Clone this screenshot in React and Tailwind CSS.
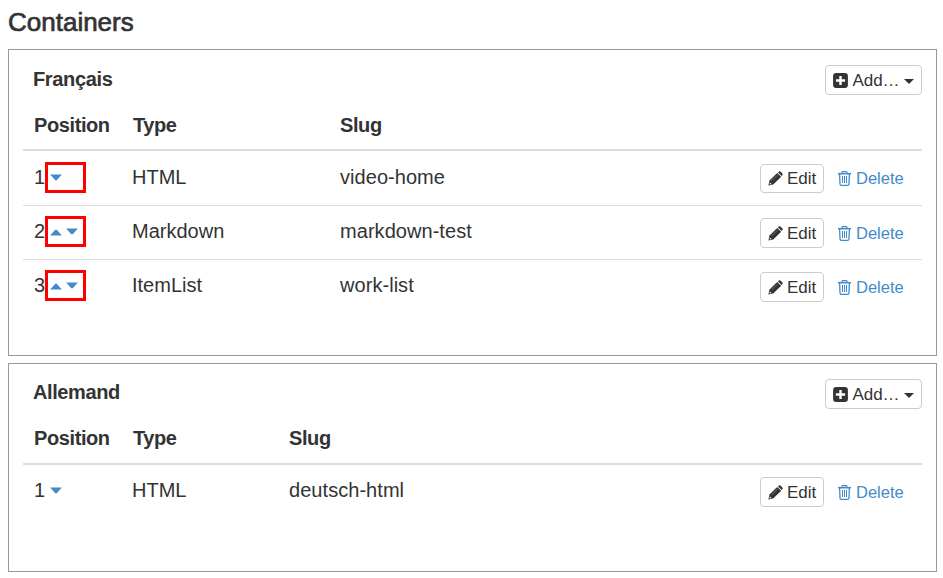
import React from "react";

const sections = [
  {
    name: "Français",
    highlight: true,
    columns: "grid-cols-[109px_208px_1fr_auto]",
    panel: "h-[307px]",
    title: "-mt-px tracking-[-0.35px]",
    header: "h-[43px]",
    spacer: "h-[58px]",
    rows: [
      { position: 1, up: false, down: true, type: "HTML", slug: "video-home", cell: "pt-[11px]", actions: "pt-[13px]", button: "h-[29px]", link: "h-[28px]" },
      { position: 2, up: true, down: true, type: "Markdown", slug: "markdown-test", cell: "pt-[10px]", actions: "pt-[12px]", button: "h-[30px]", link: "h-[30px]" },
      { position: 3, up: true, down: true, type: "ItemList", slug: "work-list", cell: "pt-[10px]", actions: "pt-[12px]", button: "h-[30px]", link: "h-[30px]" },
    ],
  },
  {
    name: "Allemand",
    highlight: false,
    columns: "grid-cols-[109px_157px_1fr_auto]",
    panel: "h-[209px]",
    title: "-mt-[2px] tracking-[-0.4px]",
    header: "h-[44px]",
    spacer: "h-[57px]",
    rows: [
      { position: 1, up: false, down: true, type: "HTML", slug: "deutsch-html", cell: "pt-[10px]", actions: "pt-[12px]", button: "h-[30px]", link: "h-[30px]" },
    ],
  },
];

function ArrowUp() {
  return (
    <svg className="mt-px h-[7px] w-3 fill-[#428bca]" viewBox="0 0 12 7">
      <path d="M0.2 6.4 5 .9q1-.9 2 0l4.8 5.5z" />
    </svg>
  );
}

function ArrowDown() {
  return (
    <svg className="h-[7px] w-3 fill-[#428bca]" viewBox="0 0 12 7">
      <path d="M0.2 0.5h11.6L7 6q-1 .9-2 0z" />
    </svg>
  );
}

function PlusIcon() {
  return (
    <svg className="size-[15px] shrink-0" viewBox="0 0 15 15">
      <rect x="0.1" y="0.1" width="14.8" height="14.8" rx="3" fill="#333" />
      <path d="M7.5 2.9v9.2M2.9 7.5h9.2" stroke="#fff" strokeWidth="2.4" />
    </svg>
  );
}

function PencilIcon() {
  return (
    <svg className="size-[15px] shrink-0" viewBox="0 0 15 15">
      <path d="M0.4 14.4 1.5 9.6 9.2 2l4 3.8-8 7.7z" fill="#333" />
      <path d="m10 1.4.9-.8q.8-.6 1.5 0l2 2q.7.8 0 1.5l-.8.9z" fill="#333" />
      <path d="m3.4 10 6.1-5.9" stroke="#999" strokeWidth="0.6" />
      <path d="m1.9 11.4 1.7 1.7-1.6.3-.4-.4z" fill="#fff" />
    </svg>
  );
}

function TrashIcon() {
  return (
    <svg className="h-[15px] w-[13px] shrink-0" viewBox="0 0 13 15" fill="none" stroke="#428bca">
      <path d="M0 2.7h13" strokeWidth="1.5" />
      <path d="M4 2.5V1.3q0-.7.7-.7h3.6q.7 0 .7.7v1.2" strokeWidth="1.1" />
      <path d="m1.6 3 .4 10q.1 1.3 1.3 1.3h6.4q1.2 0 1.3-1.3l.4-10" strokeWidth="1.3" />
      <path d="M4.5 5v7M6.5 5v7M8.5 5v7" />
    </svg>
  );
}

function AddButton() {
  return (
    <button className="flex h-[30px] w-[97px] items-center rounded-[4px] border border-[#ccc] bg-white pl-[7px] text-[17px] leading-[28px] text-[#333]">
      <PlusIcon />
      <span className="mt-px ml-[3px] w-[50px] whitespace-nowrap">Add…</span>
      <svg className="mt-[3px] ml-[3px] h-[5px] w-[10px] fill-[#333]" viewBox="0 0 10 5">
        <path d="M0 0h10L5 5z" />
      </svg>
    </button>
  );
}

function Row({ row, columns, highlight, first }) {
  return (
    <div className={`grid ${columns} ${first ? "h-[54px]" : "-mb-px h-[55px] border-t border-[#ddd]"}`}>
      <div className={`flex items-start pl-[11px] ${row.cell}`}>
        <span className="w-[11px] leading-[31px]">{row.position}</span>
        <div
          className={`flex h-[31px] w-[41px] items-center gap-1 border-[3px] pl-[2px] ${
            highlight ? "border-[#ff0000]" : "border-transparent"
          }`}
        >
          {row.up && <ArrowUp />}
          {row.down && <ArrowDown />}
        </div>
      </div>
      <div className={`leading-[31px] ${row.cell}`}>{row.type}</div>
      <div className={`leading-[31px] tracking-[0.05px] ${row.cell}`}>{row.slug}</div>
      <div className={`flex items-start pr-[18px] ${row.actions}`}>
        <button
          className={`flex w-16 items-center gap-1 rounded-[4px] border border-[#ccc] bg-white pl-[7px] text-[17px] leading-[26px] ${row.button}`}
        >
          <PencilIcon />
          <span className="mt-px">Edit</span>
        </button>
        <a className={`ml-[14px] flex w-[66px] items-center gap-[5px] text-[16.5px] leading-[26px] text-[#428bca] ${row.link}`}>
          <TrashIcon />
          <span>Delete</span>
        </a>
      </div>
    </div>
  );
}

function Section({ section }) {
  return (
    <section className={`border border-[#999] px-[14px] ${section.panel}`}>
      <div className={`flex items-start justify-between pt-[15px] ${section.spacer}`}>
        <h2 className={`pl-[10px] text-[20px] leading-[30px] font-bold ${section.title}`}>{section.name}</h2>
        <AddButton />
      </div>
      <div
        className={`grid border-b-2 border-[#ddd] text-[20px] leading-[35px] font-bold tracking-[-0.4px] ${section.columns} ${section.header}`}
      >
        <div className="pl-[11px]">Position</div>
        <div className="pl-px">Type</div>
        <div>Slug</div>
      </div>
      {section.rows.map((row, i) => (
        <Row key={row.slug} row={row} columns={section.columns} highlight={section.highlight} first={i === 0} />
      ))}
    </section>
  );
}

export default function App() {
  return (
    <main className="h-[578px] w-[943px] overflow-hidden bg-white pr-[6px] pl-2 font-['Liberation_Sans',Arial,sans-serif] text-[20px] text-[#333]">
      <h1 className="flex h-[49px] items-start pt-[7px] text-[26px] leading-[30px] [-webkit-text-stroke:0.7px_#333]">
        Containers
      </h1>
      <div className="flex flex-col gap-[7px]">
        {sections.map((section) => (
          <Section key={section.name} section={section} />
        ))}
      </div>
    </main>
  );
}
